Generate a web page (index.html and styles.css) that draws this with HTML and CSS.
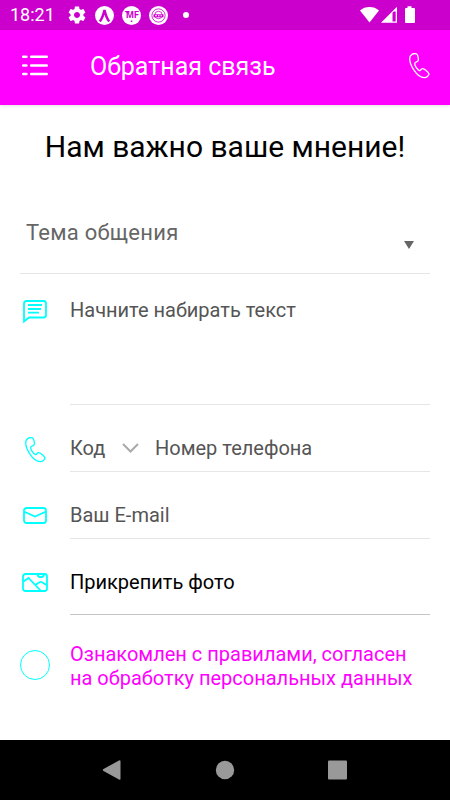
FILE: index.html
```html
<!DOCTYPE html>
<html lang="ru">
	<head>
		<meta charset="utf-8">
		<title>Обратная связь</title>
		<meta name="viewport" content="width=device-width, initial-scale=1">
		<link rel="stylesheet" href="styles.css">
	</head>
	<body>
		<!-- общая иконка телефона -->
		<svg class="sprite" width="0" height="0">
			<symbol id="phone" viewBox="0 0 21 26">
				<path d="M3 1.4C4.500 .5 6.500 .3 7.700 1C9 2.300 9.600 5.800 9.300 7.400C9 9 5.900 8.800 5.700 10.600C5.500 12.800 8.600 16.800 10.400 17.700C11.800 18 12 16 13.200 15.700C15 15.300 19.500 18.900 20 21C19.800 22.700 17.400 24.500 15.500 24.600C11.500 24.800 7.500 21 4.600 16.600C2.300 13 .8 9.300 .7 6C.7 4 1.500 2.300 3 1.400Z"/>
			</symbol>
		</svg>

		<div class="status-bar">
			<span class="time">18:21</span>
			<svg class="status-icon gear" width="18" height="18" viewBox="1.500 1.500 21 21">
				<path d="M19.430 12.980c.04-.32.07-.64.07-.98s-.03-.66-.07-.98l2.110-1.650c.19-.15.24-.42.12-.64l-2-3.460c-.12-.22-.39-.3-.61-.22l-2.490 1c-.52-.4-1.080-.73-1.690-.98l-.38-2.650C14.460 2.180 14.250 2 14 2h-4c-.25 0-.46.18-.49.42l-.38 2.650c-.61.25-1.170.59-1.690.98l-2.490-1c-.23-.09-.49 0-.61.22l-2 3.460c-.13.22-.07.49.12.64l2.110 1.650c-.04.32-.07.65-.07.98s.03.66.07.98l-2.110 1.650c-.19.15-.24.42-.12.64l2 3.460c.12.22.39.3.61.22l2.490-1c.52.4 1.080.73 1.690.98l.38 2.650c.03.24.24.42.49.42h4c.25 0 .46-.18.49-.42l.38-2.650c.61-.25 1.170-.59 1.690-.98l2.490 1c.23.09.49 0 .61-.22l2-3.460c.12-.22.07-.49-.12-.64l-2.110-1.650zM12 15.500c-1.930 0-3.500-1.570-3.500-3.500s1.570-3.500 3.500-3.500 3.500 1.570 3.500 3.500-1.570 3.500-3.500 3.500z"/>
			</svg>
			<svg class="status-icon arrow" width="19" height="19" viewBox="0 0 19 19">
				<circle cx="9.500" cy="9.500" r="9.500"/>
				<path class="cut-line" d="M4.800 15.500C7.300 12.500 8.500 8.500 9.500 4C10.500 8.500 11.700 12.500 14.200 15.500"/>
			</svg>
			<svg class="status-icon mf" width="19" height="19" viewBox="0 0 19 19">
				<circle cx="9.500" cy="9.500" r="9.500"/>
				<text class="cut" x="10.500" y="12">MF</text>
				<path class="cut" d="M2.500 5h5v1.500H4zM8.800 14.500h1.500v1.500H8.800z"/>
			</svg>
			<svg class="status-icon seal" width="19" height="19" viewBox="0 0 19 19">
				<circle cx="9.500" cy="9.500" r="9.500"/>
				<circle class="cut-ring" cx="9.500" cy="9.500" r="6.600"/>
				<circle class="cut-ring" cx="9.500" cy="9" r="3.700"/>
				<path class="cut" d="M4.500 8.300h10v3h-10z"/>
				<path d="M6 9.300h2v1H6zM9 9.300h1.500v1H9zM11.500 9.300H13v1h-1.500z"/>
			</svg>
			<span class="dot"></span>
			<svg class="status-icon system" width="55" height="18" viewBox="0 0 55 18">
				<path d="M0 4.500C5 -.1 14 -.1 19 4.500L9.500 16.500Z"/>
				<path fill-rule="evenodd" d="M37 .8V16.800H21ZM32.500 6.800V15.500H35.700V5.500H33.800Z"/>
				<path d="M45 2h2.500V.3h4V2H54q1 0 1 1v13q0 1-1 1h-8q-1 0-1-1V3q0-1 1-1z"/>
			</svg>
		</div>

		<header class="app-bar">
			<svg class="menu-icon" width="26" height="21" viewBox="0 0 26 21">
				<path d="M1.200 1.700h3.200M9.200 1.700h15.500M1.200 10.500h3.200M9.200 10.500h15.500M1.200 19h3.200M9.200 19h15.500"/>
			</svg>
			<h1 class="app-title">Обратная связь</h1>
			<svg class="call-icon" width="21" height="26"><use href="#phone"/></svg>
		</header>

		<main class="feedback">
			<h2 class="heading">Нам важно ваше мнение!</h2>

			<div class="topic">
				<span>Тема общения</span>
				<svg class="topic-arrow" width="10" height="8" viewBox="0 0 10 8"><path d="M0 0h10L5 8z"/></svg>
			</div>

			<div class="row row-message">
				<div class="row-icon">
					<svg width="24" height="23" viewBox="0 0 24 23">
						<path d="M3.500 1h17q2.500 0 2.500 2.500v11.500q0 2.500-2.500 2.500H6L1 21.500V3.500Q1 1 3.500 1z"/>
						<path d="M5 5h14M5 9h13M5 12.700h11"/>
					</svg>
				</div>
				<div class="field">Начните набирать текст</div>
			</div>

			<div class="row row-phone">
				<div class="row-icon thin">
					<svg width="21" height="26"><use href="#phone"/></svg>
				</div>
				<div class="field">
					<span class="code">Код</span>
					<svg class="chevron" width="17" height="10" viewBox="0 0 17 10"><path d="M1 1l7.500 7.500L16 1"/></svg>
					<span>Номер телефона</span>
				</div>
			</div>

			<div class="row row-email">
				<div class="row-icon">
					<svg width="24" height="17" viewBox="0 0 24 17">
						<rect x="1" y="1" width="22" height="15" rx="2.500"/>
						<path d="M1.500 4.800L12 9.500L22.500 4.800"/>
					</svg>
				</div>
				<div class="field">Ваш E-mail</div>
			</div>

			<div class="row row-photo">
				<div class="row-icon">
					<svg width="26" height="19" viewBox="0 0 26 19">
						<rect x="1" y="1" width="24" height="17" rx="2.500"/>
						<path d="M1.500 8.500L6.500 5L18.500 17.500M13.500 12C16 10 18 8.300 19.500 9L24.500 12M15.500 1.500C16 5 21.500 5 22 1.500"/>
					</svg>
				</div>
				<div class="field">Прикрепить фото</div>
			</div>

			<div class="agree">
				<span class="agree-check"></span>
				<p class="agree-text">Ознакомлен с правилами, согласен<br>на обработку персональных данных</p>
			</div>
		</main>

		<nav class="nav-bar">
			<svg width="20" height="20" viewBox="0 0 20 20"><path d="M17 .5q1.500-.8 1.500 1v17q0 1.800-1.500 1L1.500 11q-1.500-1 0-2z"/></svg>
			<svg width="20" height="20" viewBox="0 0 20 20"><circle cx="10" cy="10" r="9.200"/></svg>
			<svg width="20" height="20" viewBox="0 0 20 20"><rect x="0" y=".5" width="19" height="19" rx="1"/></svg>
		</nav>
	</body>
</html>
```
FILE: styles.css
```css
/* общие стили */
* {
	margin: 0;
	padding: 0;
	box-sizing: border-box;
}

body {
	font-family: Roboto, "Noto Sans", sans-serif;
	font-size: 20px;
	background-color: #fff;
	color: #000;
	height: 100vh;
	overflow: hidden;
	display: flex;
	flex-direction: column;
}

svg {
	display: block;
	flex: none;
}

.sprite {
	position: absolute;
}

/* строка состояния */
.status-bar {
	height: 30px;
	flex: none;
	display: flex;
	align-items: center;
	padding: 0 35px 0 10px;
	background-color: #cc00cc;
	color: #fff;
}

.time {
	width: 58px;
	font-size: 18px;
	line-height: 30px;
}

.status-icon {
	fill: #fff;
}

.arrow {
	margin-left: 9px;
}

.mf,
.seal {
	margin-left: 8px;
}

.mf text {
	font-size: 9px;
	font-weight: 700;
	text-anchor: middle;
}

.cut {
	fill: #cc00cc;
}

.cut-line {
	fill: none;
	stroke: #cc00cc;
	stroke-width: 2.5;
}

.cut-ring {
	fill: none;
	stroke: #cc00cc;
	stroke-width: 0.8;
}

.dot {
	width: 6px;
	height: 6px;
	margin-left: 15px;
	border-radius: 50%;
	background-color: #fff;
}

.system {
	margin-left: auto;
}

/* шапка */
.app-bar {
	height: 75px;
	flex: none;
	display: flex;
	align-items: center;
	padding: 0 20px 0 22px;
	background-color: #ff00ff;
	color: #fff;
	box-shadow: 0 1px 3px rgba(0,0,0,0.12);
}

.menu-icon {
	margin-top: -5px;
	fill: none;
	stroke: #fff;
	stroke-width: 2.6;
	stroke-linecap: round;
}

.app-title {
	flex: 1;
	margin: -3px 0 0 42px;
	font-size: 25px;
	font-weight: 400;
}

.call-icon {
	margin-top: -4px;
	fill: none;
	stroke: #fff;
	stroke-width: 1.3;
}

/* форма */
.feedback {
	flex: 1;
	padding: 0 20px;
}

.heading {
	padding-top: 22px;
	font-size: 30px;
	font-weight: 400;
	line-height: 40px;
	text-align: center;
	white-space: nowrap;
}

.topic {
	height: 107px;
	display: flex;
	justify-content: space-between;
	padding: 52px 16px 0 6px;
	border-bottom: 1px solid #e6e6e6;
	font-size: 22px;
	line-height: 28px;
	letter-spacing: 0.25px;
	color: #666;
}

.topic-arrow {
	margin-top: 22px;
	fill: #666;
}

.row {
	display: flex;
	color: #555;
}

.row-icon {
	width: 50px;
	height: 28px;
	display: flex;
	align-items: center;
	padding-left: 3px;
	fill: none;
	stroke: #00ffff;
	stroke-width: 1.8;
}

.thin {
	padding-left: 5px;
	stroke-width: 1.3;
}

.field {
	flex: 1;
	display: flex;
	border-bottom: 1px solid #e6e6e6;
	line-height: 28px;
}

.row-message {
	height: 131px;
	padding-top: 22px;
}

.row-message .row-icon {
	height: 30px;
}

.row-phone {
	height: 67px;
	padding-top: 29px;
}

.code {
	width: 52px;
}

.chevron {
	margin: 9px 16px 0 0;
	fill: none;
	stroke: #aaa;
	stroke-width: 2;
}

.row-phone .row-icon {
	height: 31px;
}

.row-email {
	height: 67px;
	padding-top: 29px;
}

.row-photo {
	height: 76px;
	padding-top: 29px;
	color: #000;
}

.row-photo .row-icon {
	padding-left: 2px;
}

.row-photo .field {
	border-bottom-color: #c4c4c4;
}

.agree {
	display: flex;
	align-items: center;
	padding-top: 27px;
}

.agree-check {
	width: 30px;
	height: 30px;
	margin: -2px 20px 0 0;
	border: 1px solid #00ffff;
	border-radius: 50%;
}

.agree-text {
	color: #ff00ff;
	line-height: 24px;
	white-space: nowrap;
}

/* системная навигация */
.nav-bar {
	height: 60px;
	flex: none;
	display: flex;
	justify-content: center;
	align-items: center;
	gap: 93px;
	background-color: #000;
	fill: #999;
}
```
